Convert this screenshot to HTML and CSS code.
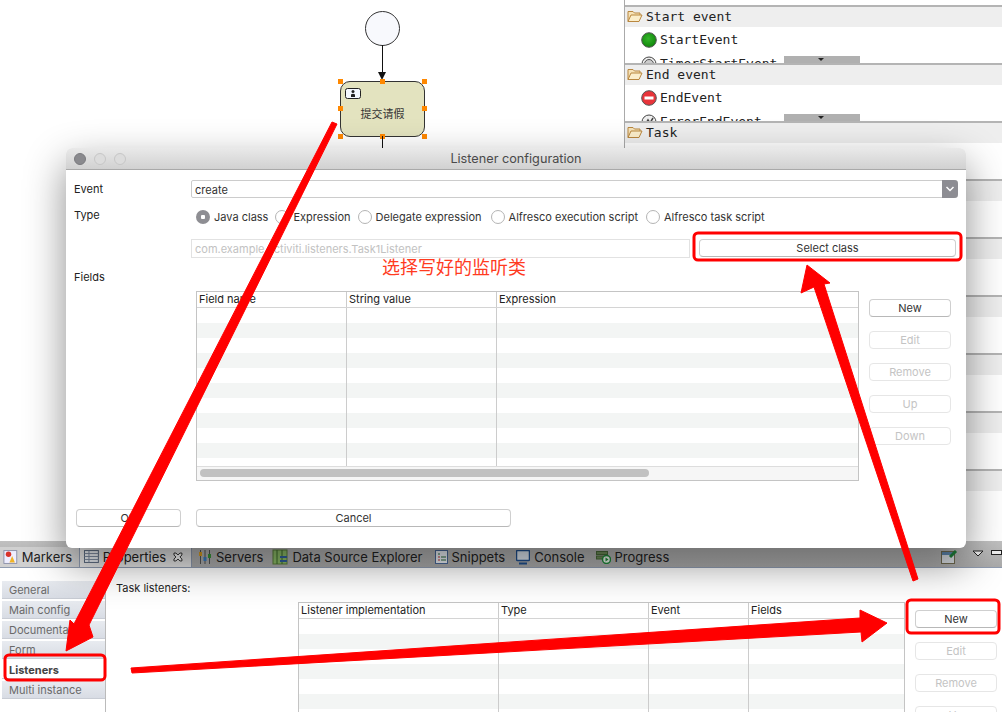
FILE: index.html
```html
<!DOCTYPE html>
<html lang="en">
<head>
  <meta charset="UTF-8" />
  <title>Listener configuration</title>
  <link rel="stylesheet" href="styles.css">
</head>
<body>

  <svg class="defs" width="0" height="0">
    <defs>
      <radialGradient id="ball-green" cx=".45" cy=".4" r=".7">
        <stop offset="0" stop-color="#35b52a"/>
        <stop offset="1" stop-color="#0a7f05"/>
      </radialGradient>
    </defs>
    <symbol id="folder" viewBox="0 0 16 14">
      <path d="M1 12.500V2.500h5l1.500 1.500h5.500v2" fill="#f6e3b8" stroke="#b9873f"/>
      <path d="M1 12.500 4 6h11l-3 6.500z" fill="#fbeecb" stroke="#b9873f"/>
    </symbol>
  </svg>

  <div class="editor">
    <div class="canvas">
      <div class="node-start"></div>
      <div class="flow flow-top"></div>
      <div class="flow-head"></div>
      <div class="node-task">
        <svg class="task-icon" width="16" height="11" viewBox="0 0 16 11">
          <rect x=".5" y=".5" width="15" height="10" rx="2" fill="#f4f8ff" stroke="#222"/>
          <circle cx="8" cy="3.500" r="1.500" fill="#222"/>
          <path d="M6 9V6.500q2-1.500 4 0V9z" fill="#222"/>
        </svg>
        <span class="task-name">提交请假</span>
        <i class="grip g1"></i><i class="grip g2"></i><i class="grip g3"></i><i class="grip g4"></i>
        <i class="grip g5"></i><i class="grip g6"></i><i class="grip g7"></i><i class="grip g8"></i>
      </div>
      <div class="flow flow-bottom"></div>
    </div>

    <div class="palette">
      <div class="drawer">
        <div class="drawer-head"><svg width="16" height="14"><use href="#folder"/></svg>Start event</div>
        <div class="tool">
          <svg width="16" height="16" viewBox="0 0 16 16"><circle cx="8" cy="8" r="7.300" fill="url(#ball-green)" stroke="#555"/></svg>
          StartEvent
        </div>
        <div class="tool">
          <svg width="16" height="16" viewBox="0 0 16 16"><circle cx="8" cy="8" r="7" fill="#eee" stroke="#444"/><circle cx="8" cy="8" r="4.500" fill="#ccc" stroke="#555"/></svg>
          TimerStartEvent
        </div>
        <div class="flyout"></div>
      </div>
      <div class="drawer">
        <div class="drawer-head"><svg width="16" height="14"><use href="#folder"/></svg>End event</div>
        <div class="tool">
          <svg width="16" height="16" viewBox="0 0 16 16"><circle cx="8" cy="8" r="7.300" fill="#e8343a" stroke="#555"/><rect x="3.500" y="6.500" width="9" height="3" fill="#fff"/></svg>
          EndEvent
        </div>
        <div class="tool">
          <svg width="16" height="16" viewBox="0 0 16 16"><circle cx="8" cy="8" r="7" fill="#eee" stroke="#444"/><path d="M4 11 7 6l2 3 3-5" fill="none" stroke="#444" stroke-width="1.500"/></svg>
          ErrorEndEvent
        </div>
        <div class="flyout"></div>
      </div>
      <div class="drawer">
        <div class="drawer-head"><svg width="16" height="14"><use href="#folder"/></svg>Task</div>
      </div>
      <div class="drawer"><div class="drawer-head"></div></div>
      <div class="drawer"><div class="drawer-head"></div></div>
      <div class="drawer"><div class="drawer-head"></div></div>
      <div class="drawer"><div class="drawer-head"></div></div>
      <div class="drawer"><div class="drawer-head"></div></div>
      <div class="drawer"><div class="drawer-head"></div></div>
    </div>
  </div>

  <div class="views">
    <div class="view-tabs">
      <div class="view-tab tab-markers">
        <svg width="16" height="16" viewBox="0 0 16 16"><rect x="1" y="1" width="14" height="14" fill="#eef" stroke="#8a8fa8"/><circle cx="6" cy="5" r="3" fill="#d8322a"/><path d="M7 14l3-7 3 7z" fill="#f0b429"/></svg>
        Markers
      </div>
      <div class="view-tab tab-active">
        <svg width="15" height="16" viewBox="0 0 15 16"><rect x=".5" y="1.500" width="14" height="12" fill="#eef2f6" stroke="#5a6a80"/><path d="M.5 4.500h14M.5 7.500h14M.5 10.500h14M5 1.500v12" stroke="#7f8ea3"/></svg>
        Properties
        <svg class="tab-close" width="12" height="12" viewBox="0 0 12 12"><path d="M2 2h2l2 2 2-2h2v2L8 6l2 2v2H8L6 8l-2 2H2V8l2-2-2-2z" fill="#fff" stroke="#333"/></svg>
      </div>
      <div class="view-tab tab-servers">
        <svg width="14" height="16" viewBox="0 0 14 16"><path d="M2.500 1v14M7 1v14M11.500 1v14" stroke="#555"/><rect x="1" y="3" width="3" height="4" fill="#e0a020"/><rect x="5.500" y="8" width="3" height="4" fill="#3b7fc4"/><rect x="10" y="5" width="3" height="4" fill="#3a9a3a"/></svg>
        Servers
      </div>
      <div class="view-tab tab-data">
        <svg width="16" height="16" viewBox="0 0 16 16"><rect x="1" y="1" width="14" height="14" fill="#8fbf6a" stroke="#5a7f3a"/><path d="M5 1v14M10 1v14" stroke="#3d6a2a"/><rect x="8" y="7" width="7" height="2" fill="#3060a0"/><rect x="8" y="11" width="7" height="2" fill="#3060a0"/></svg>
        Data Source Explorer
      </div>
      <div class="view-tab">
        <svg width="13" height="16" viewBox="0 0 13 16"><rect x=".5" y="1.500" width="12" height="13" fill="#eef2f8" stroke="#4a6a9a"/><path d="M3 5h2M6 8h5M6 11h5" stroke="#2a6a3a"/><path d="M3 8h2M3 11h2" stroke="#c03030"/></svg>
        Snippets
      </div>
      <div class="view-tab">
        <svg width="14" height="15" viewBox="0 0 14 15"><rect x=".5" y=".5" width="13" height="10" rx="1" fill="#dfe8f2" stroke="#1f4f8f" stroke-width="1.500"/><rect x="3" y="12.500" width="8" height="2" fill="#1f4f8f"/></svg>
        Console
      </div>
      <div class="view-tab">
        <svg width="15" height="14" viewBox="0 0 15 14"><rect x=".5" y="1.500" width="11" height="3" fill="#6f8f5a" stroke="#4a6a3a"/><rect x=".5" y="6" width="8" height="3" fill="#6f8f5a" stroke="#4a6a3a"/><circle cx="10.500" cy="9.500" r="4" fill="#eaf6ea" stroke="#1f8a3a" stroke-width="1.500"/><path d="M9.500 7.500v4l3-2z" fill="#1f8a3a"/></svg>
        Progress
      </div>
      <div class="view-tools">
        <svg width="17" height="14" viewBox="0 0 17 14"><rect x=".5" y="1.500" width="13" height="12" fill="#d8dde2" stroke="#6f6a50"/><rect x="1" y="2" width="12" height="3" fill="#5f88b0"/><path d="M9 7l6-6" stroke="#1f7f3a" stroke-width="3"/></svg>
        <svg width="12" height="7" viewBox="0 0 12 7"><path d="M1 1h10L6 6z" fill="#eee" stroke="#222"/></svg>
        <span class="min-box"></span>
      </div>
    </div>

    <div class="view-body">
      <div class="side-tabs">
        <div class="side-tab">General</div>
        <div class="side-tab">Main config</div>
        <div class="side-tab">Documentation</div>
        <div class="side-tab">Form</div>
        <div class="side-tab side-active">Listeners</div>
        <div class="side-tab">Multi instance</div>
      </div>
      <div class="view-main">
        <div class="section-title">Task listeners:</div>
        <div class="listeners">
          <div class="tbl tbl-listeners">
            <div class="tbl-head">
              <span class="col c-200">Listener implementation</span>
              <span class="col c-150">Type</span>
              <span class="col c-100">Event</span>
              <span class="col c-rest">Fields</span>
            </div>
            <div class="tbl-body">
              <span class="col c-200"></span>
              <span class="col c-150"></span>
              <span class="col c-100"></span>
              <span class="col c-rest"></span>
            </div>
          </div>
          <div class="btn-col">
            <button class="btn">New</button>
            <button class="btn" disabled>Edit</button>
            <button class="btn" disabled>Remove</button>
            <button class="btn" disabled>Up</button>
          </div>
        </div>
      </div>
    </div>
  </div>

  <div class="dialog">
    <div class="titlebar">
      <i class="light light-on"></i><i class="light"></i><i class="light"></i>
      <span class="title">Listener configuration</span>
    </div>
    <div class="dialog-body">
      <div class="row row-event">
        <label class="row-label">Event</label>
        <div class="combo">create<span class="combo-arrow"><svg width="10" height="6" viewBox="0 0 10 6"><path d="M1.500 1 5 4.500 8.500 1" fill="none" stroke="#fff" stroke-width="1.500"/></svg></span></div>
      </div>
      <div class="row row-type">
        <label class="row-label row-label-up">Type</label>
        <div class="radios">
          <span class="radio-item"><i class="radio radio-on"></i>Java class</span>
          <span class="radio-item"><i class="radio"></i>Expression</span>
          <span class="radio-item"><i class="radio"></i>Delegate expression</span>
          <span class="radio-item"><i class="radio"></i>Alfresco execution script</span>
          <span class="radio-item"><i class="radio"></i>Alfresco task script</span>
        </div>
      </div>
      <div class="row row-class">
        <div class="class-input">com.example.activiti.listeners.Task1Listener</div>
        <button class="btn btn-select">Select class</button>
      </div>
      <div class="fields-label">Fields</div>
      <div class="fields">
        <div class="tbl tbl-fields">
          <div class="tbl-head">
            <span class="col c-150">Field name</span>
            <span class="col c-150">String value</span>
            <span class="col c-rest">Expression</span>
          </div>
          <div class="tbl-body">
            <span class="col c-150"></span>
            <span class="col c-150"></span>
            <span class="col c-rest"></span>
          </div>
          <div class="tbl-scroll"><span class="thumb"></span></div>
        </div>
        <div class="btn-col">
          <button class="btn">New</button>
          <button class="btn" disabled>Edit</button>
          <button class="btn" disabled>Remove</button>
          <button class="btn" disabled>Up</button>
          <button class="btn" disabled>Down</button>
        </div>
      </div>
      <div class="dialog-foot">
        <button class="btn btn-ok">OK</button>
        <button class="btn btn-cancel">Cancel</button>
      </div>
    </div>
  </div>

  <div class="note">选择写好的监听类</div>

  <svg class="marks" width="1002" height="712" viewBox="0 0 1002 712">
    <rect class="mark-box" x="694" y="233" width="267" height="27" rx="4"/>
    <rect class="mark-box" x="907" y="600" width="92" height="33" rx="4"/>
    <rect class="mark-box" x="5" y="655" width="100" height="25" rx="4"/>
    <polygon class="mark-arrow" points="332,122 337,124 89,625 93,637 66,651 70,620 74,624"/>
    <polygon class="mark-arrow" points="131,668 860,618 860,610 887,623 862,642 861,632 132,673"/>
    <polygon class="mark-arrow" points="918,579 913,581 814,287 801,293 807,265 830,283 824,284"/>
  </svg>

</body>
</html>
```

FILE: styles.css
```css
body {
  font-family: Inter, "Noto Sans CJK SC", sans-serif;
  font-size: 11px;
  color: #333;
  background: white;
  margin: 0;
  width: 1002px;
  height: 712px;
  overflow: hidden;
  position: relative;
}

.defs {
  position: absolute;
}

/* editor area behind the dialog */
.editor {
  display: flex;
  height: 541px;
}

.canvas {
  width: 624px;
  position: relative;
}

.node-start {
  position: absolute;
  left: 365px;
  top: 11px;
  width: 33px;
  height: 33px;
  border: 1px solid #333;
  border-radius: 50%;
  background: #f8f9fd;
}

.flow {
  position: absolute;
  left: 382px;
  width: 1px;
  background: #111;
}

.flow-top {
  top: 45px;
  height: 30px;
}

.flow-bottom {
  top: 136px;
  height: 14px;
}

.flow-head {
  position: absolute;
  left: 378px;
  top: 72px;
  border-left: 4px solid transparent;
  border-right: 4px solid transparent;
  border-top: 8px solid #111;
}

.node-task {
  position: absolute;
  left: 340px;
  top: 81px;
  width: 83px;
  height: 54px;
  border: 1px solid #333;
  border-radius: 10px;
  background: #e3e3bf;
}

.task-icon {
  position: absolute;
  left: 4px;
  top: 6px;
}

.task-name {
  position: absolute;
  left: 0;
  right: 0;
  top: 23px;
  text-align: center;
  font-size: 11px;
  color: #333;
}

.grip {
  position: absolute;
  width: 5px;
  height: 5px;
  background: #ff8800;
}

.g1 { left: -3px; top: -3px; }
.g2 { left: 39px; top: -3px; }
.g3 { right: -3px; top: -3px; }
.g4 { left: -3px; top: 24px; }
.g5 { right: -3px; top: 24px; }
.g6 { left: -3px; bottom: -3px; }
.g7 { left: 39px; bottom: -3px; }
.g8 { right: -3px; bottom: -3px; }

.palette {
  flex: 1;
  border-left: 1px solid #aaa;
  padding-top: 5px;
  font-family: "DejaVu Sans Mono", monospace;
  font-size: 13px;
  color: #222;
  overflow: hidden;
}

.drawer {
  height: 56px;
  border-top: 2px solid #b4b4b4;
  overflow: hidden;
  position: relative;
}

.drawer-head {
  height: 20px;
  box-sizing: border-box;
  background: #eeeeee;
  display: flex;
  align-items: center;
  gap: 3px;
  padding: 0 0 2px 2px;
}

.tool {
  display: flex;
  align-items: center;
  gap: 3px;
  height: 23px;
  padding-left: 16px;
  margin-top: 1px;
}

.flyout {
  position: absolute;
  left: 159px;
  bottom: 0;
  width: 76px;
  height: 7px;
  background: #b0b0b0;
}

.flyout::after {
  content: "";
  position: absolute;
  left: 34px;
  top: 2px;
  border-left: 3px solid transparent;
  border-right: 3px solid transparent;
  border-top: 3px solid #222;
}

/* bottom views */
.views {
  height: 171px;
  display: flex;
  flex-direction: column;
}

.view-tabs {
  height: 26px;
  display: flex;
  align-items: flex-end;
  background: linear-gradient(#c0c0c0, #aaaaaa);
  border-bottom: 1px solid #8f9bb0;
  font-size: 13px;
  color: #222;
}

.view-tab {
  height: 20px;
  box-sizing: border-box;
  padding: 0 7px 0 4px;
  display: flex;
  align-items: center;
  gap: 4px;
  flex-shrink: 0;
}

.tab-markers {
  width: 80px;
  padding-left: 3px;
  background: #d0d0d0;
  border-right: 1px solid #8f9bb0;
}

.tab-active {
  width: 112px;
  background: #e6e6e6;
  border-right: 1px solid #8f9bb0;
}

.tab-close {
  margin-left: 2px;
}

.tab-servers {
  padding: 0 5px 0 6px;
}

.tab-data {
  padding-right: 8px;
}

.view-tools {
  margin-left: auto;
  height: 20px;
  box-sizing: border-box;
  padding-top: 3px;
  display: flex;
  align-items: flex-start;
  gap: 14px;
}

.min-box {
  width: 9px;
  height: 3px;
  border: 1px solid #222;
  background: #eee;
  margin-left: -7px;
}

.view-body {
  flex: 1;
  display: flex;
  overflow: hidden;
}

.side-tabs {
  width: 103px;
  margin-left: 2px;
  padding-top: 13px;
  border-right: 1px solid #bbb;
}

.side-tab {
  height: 17px;
  line-height: 18px;
  padding-left: 7px;
  margin-bottom: 2px;
  color: #6a6a6a;
  background: linear-gradient(#e8ebf0, #d8dce4);
  border-bottom: 1px solid #c8ccd4;
}

.side-active {
  background: white;
  color: #444;
  font-weight: bold;
}

.view-main {
  flex: 1;
  padding: 13px 0 0 10px;
}

.section-title {
  height: 14px;
  color: #222;
}

.listeners {
  display: flex;
  margin-top: 7px;
  margin-left: 182px;
}

.listeners .btn-col {
  margin-top: 8px;
}

.tbl {
  border: 1px solid #c4c4c4;
  box-sizing: border-box;
  background: white;
  color: #222;
}

.tbl-listeners {
  width: 607px;
  height: 130px;
  border-bottom: none;
}

.tbl-fields {
  width: 663px;
  height: 190px;
}

.tbl-head {
  display: flex;
  height: 15px;
  line-height: 15px;
  border-bottom: 1px solid #d4d4d4;
}

.tbl-head .col {
  padding-left: 2px;
}

.tbl-body {
  display: flex;
  background: repeating-linear-gradient(white 0, white 15px, #f3f5f4 15px, #f3f5f4 30px);
}

.tbl-listeners .tbl-body {
  height: 115px;
}

.tbl-fields .tbl-body {
  height: 158px;
}

.col {
  border-right: 1px solid #cccccc;
  box-sizing: border-box;
  display: block;
}

.c-200 { width: 200px; }
.c-150 { width: 150px; }
.c-100 { width: 100px; }

.c-rest {
  flex: 1;
  border-right: none;
}

.tbl-scroll {
  height: 14px;
  box-sizing: border-box;
  background: #f6f6f6;
  border-top: 1px solid #dddddd;
  padding: 2px 3px 0;
}

.thumb {
  display: block;
  width: 449px;
  height: 8px;
  border-radius: 4px;
  background: #c1c1c1;
}

.btn {
  font-family: inherit;
  font-size: 11px;
  color: #333;
  height: 18px;
  padding: 0;
  border: 1px solid #cfcfcf;
  border-bottom-color: #b8b8b8;
  border-radius: 4px;
  background: white;
}

.btn:disabled {
  color: #c4c4c4;
  border-color: #e6e6e6;
}

.btn-col {
  display: flex;
  flex-direction: column;
  gap: 14px;
  width: 82px;
  margin-left: 10px;
  margin-top: 8px;
}

/* dialog */
.dialog {
  position: absolute;
  left: 66px;
  top: 148px;
  width: 900px;
  height: 400px;
  background: white;
  border-radius: 6px;
  box-shadow: 0 16px 40px rgba(0, 0, 0, 0.45);
  overflow: hidden;
}

.titlebar {
  height: 21px;
  background: linear-gradient(#e9e9e9, #d1d1d1);
  border-bottom: 1px solid #a9a9a9;
  display: flex;
  align-items: center;
  gap: 8px;
  padding-left: 8px;
  position: relative;
}

.light {
  width: 10px;
  height: 10px;
  border: 1px solid #c6c6c6;
  border-radius: 50%;
  background: #dcdcdc;
}

.light-on {
  background: #8a8a8e;
  border-color: #7a7a7e;
}

.title {
  position: absolute;
  left: 0;
  right: 0;
  top: 3px;
  text-align: center;
  font-size: 12.700px;
  color: #4a4a4a;
}

.dialog-body {
  padding: 10px 8px 0;
}

.row {
  display: flex;
  align-items: center;
}

.row-label {
  width: 117px;
  flex-shrink: 0;
  color: #222;
}

.row-label-up {
  margin-top: -4px;
}

.row-event {
  height: 18px;
}

.combo {
  width: 768px;
  height: 18px;
  line-height: 19px;
  box-sizing: border-box;
  border: 1px solid #cccccc;
  border-radius: 2px;
  padding-left: 3px;
  color: #333;
  position: relative;
}

.combo-arrow {
  position: absolute;
  right: -1px;
  top: -1px;
  width: 16px;
  height: 18px;
  border-radius: 0 4px 4px 0;
  background: #8d8d93;
  display: flex;
  align-items: center;
  justify-content: center;
}

.row-type {
  height: 17px;
  margin-top: 10px;
}

.radios {
  display: flex;
  padding-left: 5px;
}

.radio-item {
  display: flex;
  align-items: center;
  gap: 4px;
  margin-right: 7px;
  color: #333;
}

.radio-item:nth-child(3) {
  margin-right: 9px;
}

.radio-item:nth-child(4) {
  margin-right: 8px;
}

.radio {
  width: 12px;
  height: 12px;
  border: 1px solid #b4b4b4;
  border-radius: 50%;
  background: white;
  display: block;
}

.radio-on {
  width: 14px;
  height: 14px;
  border: none;
  background: radial-gradient(circle, white 0, white 2px, #8e8e93 2.500px);
}

.row-class {
  height: 19px;
  margin-top: 14px;
  padding-left: 117px;
}

.class-input {
  width: 499px;
  height: 19px;
  line-height: 19px;
  box-sizing: border-box;
  border: 1px solid #e2e2e2;
  padding-left: 3px;
  color: #c2c2c2;
}

.btn-select {
  width: 257px;
  margin-left: 9px;
  margin-top: -2px;
}

.fields-label {
  height: 14px;
  line-height: 14px;
  margin-top: 12px;
  color: #222;
}

.fields {
  display: flex;
  margin-top: 7px;
  margin-left: 122px;
}

.dialog-foot {
  display: flex;
  gap: 15px;
  margin-top: 28px;
  padding-left: 2px;
}

.btn-ok {
  width: 105px;
}

.btn-cancel {
  width: 315px;
}

/* annotations over the screenshot */
.note {
  position: absolute;
  left: 382px;
  top: 257px;
  font-size: 18px;
  line-height: 22px;
  color: #ff3b1f;
  white-space: nowrap;
}

.marks {
  position: absolute;
  left: 0;
  top: 0;
  pointer-events: none;
}

.mark-box {
  fill: none;
  stroke: #ff0000;
  stroke-width: 3;
}

.mark-arrow {
  fill: #ff0000;
  stroke: #ff0000;
  stroke-width: 1;
  stroke-linejoin: round;
}
```
